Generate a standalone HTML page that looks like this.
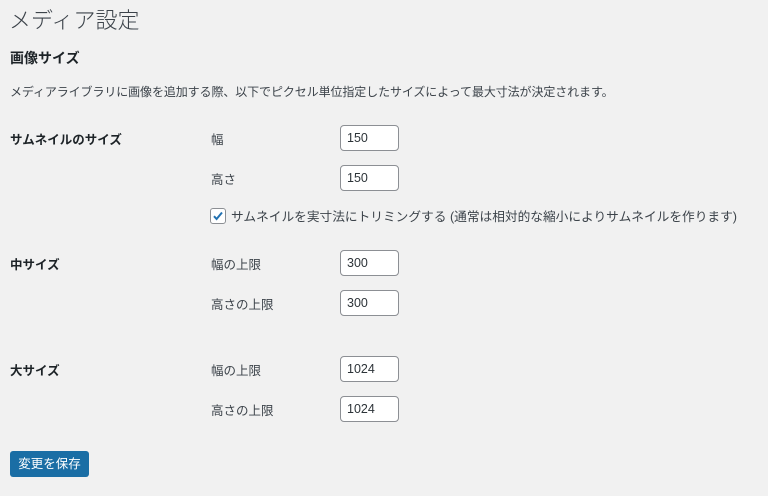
<!DOCTYPE html><html><head><meta charset="utf-8"><style>
body{margin:0;width:768px;height:496px;background:#f1f1f1;font-family:"Liberation Sans","Noto Sans CJK JP",sans-serif;color:#1d2327;position:relative;overflow:hidden}
.a{position:absolute;white-space:nowrap}
.t{font-size:22px;color:#3c434a;left:9px;top:3px;font-weight:300}
.h{font-size:14px;font-weight:bold;left:10px;top:48px}
.d{font-size:12px;left:10px;top:83px;color:#3c434a;letter-spacing:-0.1px}
.l{font-size:12.5px;font-weight:bold;left:10px}
.f{font-size:12.5px;left:211px;color:#3c434a}
.i{left:340px;border:1px solid #8c8f94;border-radius:4px;background:#fff;font-size:12.5px;line-height:24px;padding-left:6px;box-sizing:border-box;width:59px;height:26px;color:#2c3338}
.cb{left:210px;top:208px;width:14px;height:14px;border:1px solid #8c8f94;border-radius:3px;background:#fff}
.b{left:10px;top:451px;width:79px;height:26px;background:#1a6ea5;border-radius:3px;color:#fff;font-size:12.5px;line-height:26px;text-align:center}
</style></head><body>
<div class="a t">メディア設定</div>
<div class="a h">画像サイズ</div>
<div class="a d">メディアライブラリに画像を追加する際、以下でピクセル単位指定したサイズによって最大寸法が決定されます。</div>
<div class="a l" style="top:129px">サムネイルのサイズ</div>
<div class="a f" style="top:129px">幅</div><div class="a i" style="top:125px">150</div>
<div class="a f" style="top:169px">高さ</div><div class="a i" style="top:165px">150</div>
<div class="a cb"><svg width="14" height="14" viewBox="0 0 14 14" style="position:absolute;left:0;top:0"><path d="M3 7.2l2.6 2.8L11 3.5" stroke="#2271b1" stroke-width="2" fill="none"/></svg></div>
<div class="a f" style="top:206px;left:231px;font-size:12.7px">サムネイルを実寸法にトリミングする (通常は相対的な縮小によりサムネイルを作ります)</div>
<div class="a l" style="top:254px">中サイズ</div>
<div class="a f" style="top:254px">幅の上限</div><div class="a i" style="top:250px">300</div>
<div class="a f" style="top:294px">高さの上限</div><div class="a i" style="top:290px">300</div>
<div class="a l" style="top:360px">大サイズ</div>
<div class="a f" style="top:360px">幅の上限</div><div class="a i" style="top:356px">1024</div>
<div class="a f" style="top:400px">高さの上限</div><div class="a i" style="top:396px">1024</div>
<div class="a b">変更を保存</div>
</body></html>
